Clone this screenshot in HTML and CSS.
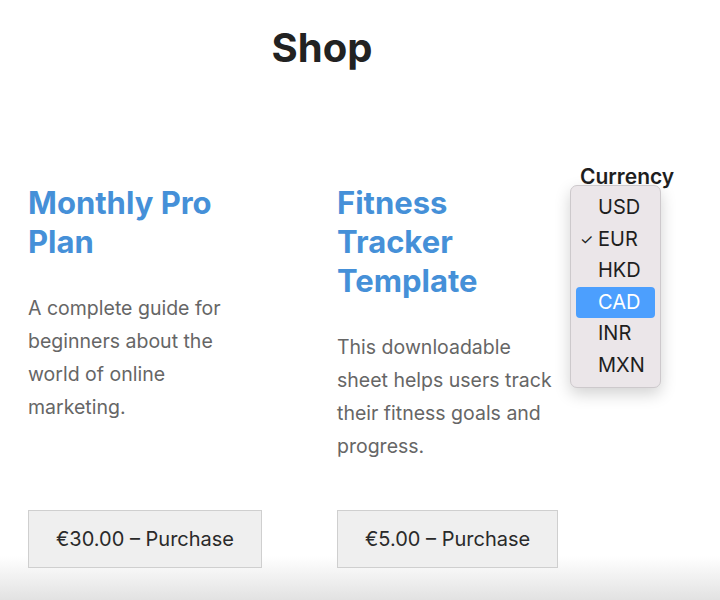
FILE: index.html
```html
<!DOCTYPE html>
<html lang="en">
<head>
  <meta charset="UTF-8">
  <meta name="viewport" content="width=device-width, initial-scale=1.0">
  <title>Shop</title>
  <link rel="stylesheet" href="styles.css">
</head>
<body>
  <div class="page">
    <h1 class="shop-title">Shop</h1>

    <!-- Product list -->
    <div class="products">
      <div class="product">
        <h2 class="product-name">Monthly Pro Plan</h2>
        <p class="product-desc">A complete guide for beginners about the world of online marketing.</p>
        <button class="buy-btn">€30.00 – Purchase</button>
      </div>
      <div class="product">
        <h2 class="product-name">Fitness Tracker Template</h2>
        <p class="product-desc">This downloadable sheet helps users track their fitness goals and progress.</p>
        <button class="buy-btn">€5.00 – Purchase</button>
      </div>
    </div>
  </div>

  <!-- Currency picker, menu is open -->
  <div class="currency">
    <div class="currency-label">Currency</div>
    <ul class="currency-menu">
      <li>USD</li>
      <li class="checked">EUR</li>
      <li>HKD</li>
      <li class="active">CAD</li>
      <li>INR</li>
      <li>MXN</li>
    </ul>
  </div>
</body>
</html>
```

FILE: styles.css
```css
html {
  height: 100%;
  background: linear-gradient(to bottom, #fff 0, #fff 556px, #e2e2e2 600px);
}

body {
  margin: 0;
  font-family: Inter, "Noto Sans", sans-serif;
  color: #222;
  position: relative;
}

.page {
  width: 588px;
  padding: 0 28px;
}

.shop-title {
  margin: 0;
  padding-top: 24px;
  text-align: center;
  font-size: 40px;
  line-height: 48px;
  font-weight: 700;
  color: #222;
}

.products {
  display: grid;
  grid-template-columns: 220px 220px;
  column-gap: 89px;
  margin-top: 111px;
}

.product {
  display: flex;
  flex-direction: column;
  align-items: flex-start;
}

.product-name {
  margin: 0;
  font-size: 31px;
  line-height: 39px;
  font-weight: 700;
  color: #4590d8;
}

.product-desc {
  margin: 31px 0 47px;
  font-size: 19.5px;
  line-height: 33px;
  color: #666;
}

.buy-btn {
  margin-top: auto;
  height: 58px;
  padding: 0 27px;
  font-family: inherit;
  font-size: 20px;
  color: #2a2a2a;
  background-color: #efefef;
  border: 1px solid #cfcfcf;
  white-space: nowrap;
}

/* currency menu sits over the page */
.currency {
  position: absolute;
  top: 165px;
  left: 570px;
}

.currency-label {
  margin-left: 10px;
  font-size: 21px;
  line-height: 24px;
  font-weight: 600;
  color: #1e1e1e;
}

.currency-menu {
  list-style: none;
  margin: -4px 0 0;
  padding: 6px 5px;
  width: 79px;
  background-color: #ebe6e9;
  border: 1px solid #cdc9cc;
  border-radius: 7px;
  box-shadow: 0 6px 16px rgba(0, 0, 0, 0.18);
}

.currency-menu li {
  position: relative;
  height: 31.5px;
  line-height: 31.5px;
  padding-left: 22px;
  font-size: 20px;
  color: #1e1e1e;
  border-radius: 4px;
}

.currency-menu li.checked::before {
  content: "✓";
  position: absolute;
  left: 4px;
  font-size: 15px;
}

.currency-menu li.active {
  background-color: #4c9ffe;
  color: #fff;
}
```
